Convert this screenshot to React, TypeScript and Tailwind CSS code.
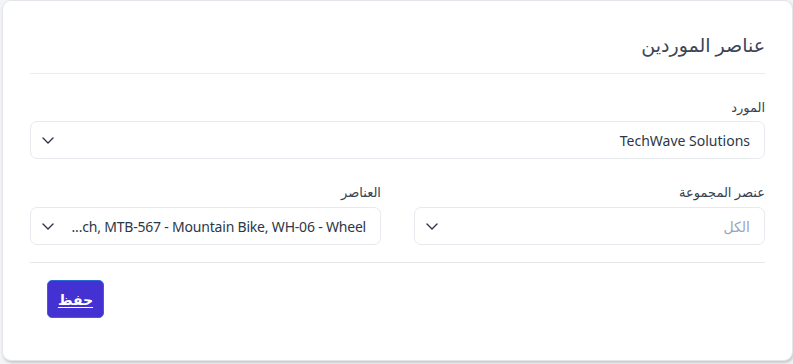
import React from "react";

function Chevron() {
  return (
    <svg width="12" height="7" viewBox="0 0 12 7" fill="none" stroke="#2d3748" strokeWidth="1.4" strokeLinecap="round" strokeLinejoin="round">
      <path d="M1 1l5 5 5-5" />
    </svg>
  );
}

function Select({ children }: { children: React.ReactNode }) {
  return (
    <div className="flex h-[38px] items-center justify-between rounded-[7px] border border-[#e6e9ee] bg-white pl-[11px] pr-[14px]">
      <div className="min-w-0 flex-1 overflow-hidden whitespace-nowrap text-right">{children}</div>
      <div className="mr-[4px] flex shrink-0 items-center">
        <Chevron />
      </div>
    </div>
  );
}

export default function App() {
  return (
    <div
      dir="rtl"
      className="h-[364px] w-[793px] bg-[#f3f4f6]"
      style={{ fontFamily: '"Noto Sans", "DejaVu Sans", sans-serif' }}
    >
      <div className="h-[361px] w-[791px] rounded-[9px] border border-[#e3e5ea] bg-white shadow-[1px_2px_3px_rgba(0,0,0,0.18)]">
        <div className="mx-[27px] border-b border-[#e9ebef] pb-[13px] pt-[29px]">
          <h1 className="text-[19px] leading-[30px] text-[#3b4656]">عناصر الموردين</h1>
        </div>
        <div className="mx-[27px] border-b border-[#e5e7eb] pb-[17px] pt-[23px]">
          <div className="flex flex-col">
            <label className="mb-[4px] text-[13px] leading-[20px] text-[#374151]">المورد</label>
            <Select>
              <span className="text-[14px] text-[#2d3748]">TechWave Solutions</span>
            </Select>
          </div>
          <div className="mt-[23px] grid grid-cols-2 gap-[33px]">
            <div className="flex flex-col">
              <label className="mb-[5px] text-[13px] leading-[20px] text-[#374151]">عنصر المجموعة</label>
              <Select>
                <span className="text-[14px] text-[#9aa6b8]">الكل</span>
              </Select>
            </div>
            <div className="flex flex-col">
              <label className="mb-[5px] text-[13px] leading-[20px] text-[#374151]">العناصر</label>
              <Select>
                <span dir="ltr" className="text-[14px] tracking-[-0.2px] text-[#2d3748]">...ch, MTB-567 - Mountain Bike, WH-06 - Wheel</span>
              </Select>
            </div>
          </div>
        </div>
        <div className="flex justify-end px-[44px] pt-[17px]">
          <button className="h-[38px] w-[57px] rounded-[5px] border border-[#2a6ad8] bg-[#4431d1] text-[14px] font-bold text-white underline underline-offset-2">
            حفظ
          </button>
        </div>
      </div>
    </div>
  );
}
